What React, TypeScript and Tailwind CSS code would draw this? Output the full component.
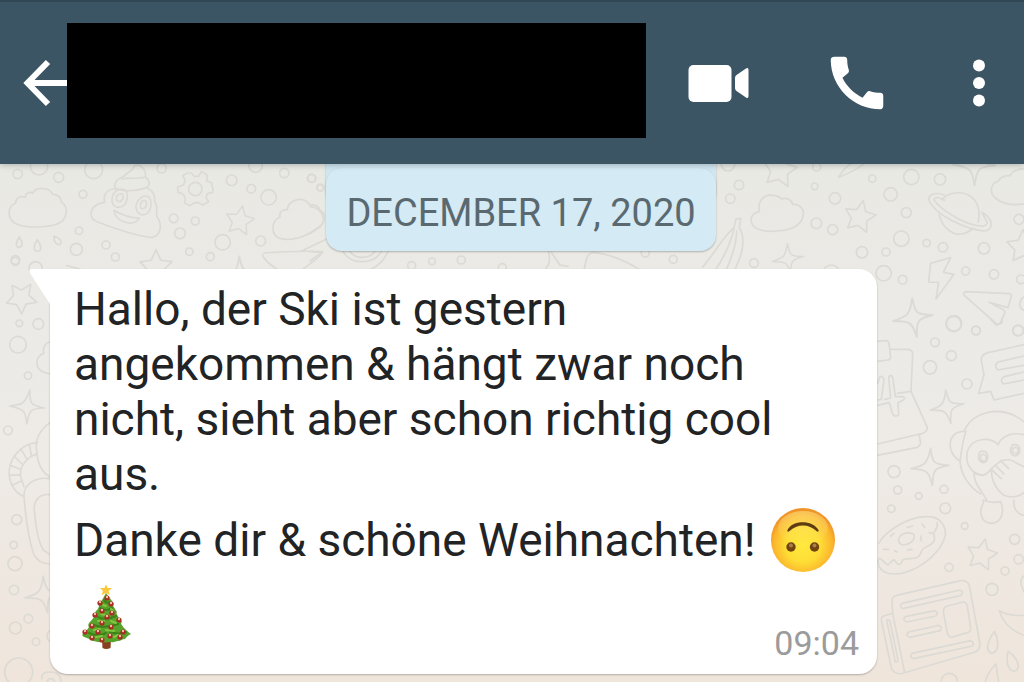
type Dot = [number, number, number];

type DoodleGroupProps = {
  x: number;
  y: number;
  dots: Dot[];
  paths: string[];
};

const STAR = "M0 -48L14 -17L47 -13L23 11L30 44L0 29L-29 43L-24 12L-47 -12L-14 -17Z";
const SPARKLE = "M-2 -52C6 -12 8 -8 52 -8C12 2 9 6 10 50C-2 12 -6 8 -52 8C-14 -4 -8 -8 -2 -52Z";

const stars = [
  { x: 240, y: 220, size: 0.3, turn: 10 },
  { x: 156, y: 266, size: 0.34, turn: 0 },
  { x: 780, y: 169, size: 0.36, turn: 10 },
  { x: 860, y: 216, size: 0.33, turn: 12 },
  { x: 1023, y: 246, size: 0.34, turn: 0 },
  { x: 982, y: 554, size: 0.32, turn: 12 },
  { x: 22, y: 297, size: 0.32, turn: 35 },
];

const sparkles = [
  { x: 788, y: 259, size: 0.3, turn: 0 },
  { x: 913, y: 318, size: 0.38, turn: 0 },
  { x: 947, y: 407, size: 0.33, turn: -2 },
  { x: 930, y: 467, size: 0.36, turn: 4 },
  { x: 27, y: 407, size: 0.33, turn: 12 },
  { x: 44, y: 595, size: 0.36, turn: 0 },
  { x: 974, y: 165, size: 0.4, turn: 10 },
  { x: 240, y: 275, size: 0.36, turn: 0 },
];

const groups: DoodleGroupProps[] = [
  {
    x: 0,
    y: 155,
    dots: [
      [53, 57, 14], [117, 34, 26], [176, 67, 15], [281, 44, 27], [485, 40, 14],
      [249, 118, 12], [767, 32, 20], [853, 54, 14], [934, 70, 12], [695, 76, 16],
      [754, 101, 13], [806, 127, 23], [960, 98, 10], [586, 102, 20], [521, 190, 13],
      [586, 198, 12], [540, 235, 16], [668, 262, 23], [782, 258, 15], [568, 290, 11],
      [631, 305, 12], [237, 227, 11], [229, 283, 18], [318, 270, 12], [346, 306, 12],
      [46, 319, 12], [107, 340, 20],
    ],
    paths: [
      "M46 145C48 128 62 122 76 126C78 112 90 110 98 114C108 96 146 94 158 118C176 118 186 132 184 142C206 152 202 188 182 202C152 220 76 220 48 206C22 194 20 156 46 145Z",
      "M58 246C48 262 44 276 57 277C70 276 68 262 58 246Z",
      "M112 254C102 270 98 288 112 289C127 288 124 272 112 254Z",
      "M162 243C160 258 168 272 180 268C190 260 176 246 162 243Z",
      "M345 102C340 76 360 70 374 62C384 52 400 44 404 32C424 24 440 48 436 66C452 78 450 92 440 98C462 108 466 124 464 140C476 158 468 170 470 184C488 208 484 240 456 248C410 244 330 216 286 198C262 184 270 148 314 142C308 118 322 102 345 102Z",
      "M347 100C370 112 410 108 440 98M366 72C390 66 410 74 436 66",
      "M342 166C342 198 400 220 418 190C392 188 364 180 342 166Z",
      "M376 105C358 96 340 110 336 130C334 154 352 162 368 154C384 142 386 114 376 105Z",
      "M368 118C356 112 346 124 350 136C358 146 374 134 368 118Z",
      "M446 126C428 116 412 134 408 152C408 174 424 186 440 176C454 166 458 138 446 126Z",
      "M438 138C426 132 418 146 422 158C430 168 444 154 438 138Z",
      "M574 54L582 64L596 64L604 50L622 60L620 78L636 84V96L640 100L638 112L622 116L618 128L626 140L608 150L596 142L582 144L570 152L554 144L556 128L548 116L534 112L533 96L550 90L556 78L548 62L562 54Z",
      "M840 186C836 172 848 162 862 164C866 134 910 120 930 150C950 148 958 158 960 166C984 180 974 208 948 222C914 248 870 260 838 250C812 238 812 200 840 186Z",
      "M792 294C850 290 930 288 968 290C958 310 930 326 910 342M788 300C790 312 812 330 830 342M905 288L988 248",
      "M200 332L240 342",
    ],
  },
  {
    x: 310,
    y: 155,
    dots: [
      [366, 319, 10], [454, 315, 12], [305, 332, 12], [577, 338, 12],
      [1090, 313, 12], [1006, 294, 12], [6, 70, 12], [32, 98, 10],
    ],
    paths: [
      "M100 290C120 330 190 330 214 290M120 290C140 316 180 310 194 290M234 290C220 320 200 336 180 344",
      "M822 344C830 320 826 296 850 292C900 296 950 320 990 344M716 290C722 320 716 330 708 340M724 292L750 330L774 334",
      "M0 155C40 158 50 200 30 216L0 236M0 290L36 292L0 318",
    ],
  },
  {
    x: 700,
    y: 155,
    dots: [
      [84, 28, 20], [117, 90, 14], [91, 131, 14], [350, 36, 12], [344, 94, 10],
      [405, 130, 17], [349, 205, 16], [398, 224, 15], [517, 71, 11], [572, 118, 20],
      [634, 66, 23], [720, 73, 17], [619, 173, 15], [604, 251, 23], [680, 264, 11],
      [729, 277, 14], [852, 280, 17], [486, 292, 17], [558, 291, 12], [551, 355, 23],
      [608, 374, 13], [797, 348, 12], [882, 358, 14], [762, 505, 23], [828, 527, 13],
      [955, 526, 16], [162, 324, 13], [394, 356, 26], [957, 193, 15], [963, 373, 13],
    ],
    paths: [
      "M178 170C172 136 194 114 226 122C240 126 246 132 246 132C260 126 276 136 278 148C300 146 312 162 310 178C306 214 270 226 230 228C194 232 158 224 154 200C150 182 164 172 178 170Z",
      "M109 192L122 190L118 220C132 240 130 270 124 294C118 316 110 330 106 342M108 192L102 218C70 244 40 300 8 336M102 222C90 270 70 310 48 342M110 228C110 270 94 310 80 342",
      "M416 66C430 44 444 28 460 24M418 66C440 58 470 42 490 28",
      "M726 134C744 112 786 106 812 124C836 140 842 176 834 202M718 178C726 220 760 240 782 237C800 236 812 226 820 220",
      "M734 120C704 110 682 118 688 138C704 178 794 222 852 228C880 226 884 194 846 172C852 184 858 194 862 204C856 220 830 212 802 204C756 186 712 152 702 134C704 122 722 130 734 136",
      "M896 78C900 66 914 62 930 62C936 48 956 40 976 42M896 78C868 86 868 118 890 132C914 150 944 152 976 146",
      "M692 325L752 308L730 352L762 358L708 432L716 382L686 381Z",
      "M798 410L928 416Q936 418 934 424L924 458L868 442L910 464Q916 468 914 476L900 506Q894 510 886 504L794 422Q786 412 798 410Z",
      "M976 424C952 436 956 462 976 468",
    ],
  },
  {
    x: 860,
    y: 320,
    dots: [
      [281, 12, 23], [348, 31, 13], [225, 67, 13], [274, 107, 15], [210, 142, 20],
      [321, 192, 15], [102, 455, 18], [113, 510, 12], [252, 508, 12], [176, 528, 10],
      [474, 32, 16],
    ],
    paths: [
      "M52 64L76 62Q86 62 87 70L92 112Q92 118 84 120L52 124",
      "M90 88L142 88Q158 88 158 102L153 214L202 322Q202 336 188 340L52 372",
      "M178 346L182 370Q180 378 172 382L52 406",
      "M52 240L64 238L72 180Q68 166 60 170L52 190M52 256L88 248L98 282Q106 294 116 284L114 248L130 240Q138 232 128 230L106 230L98 172Q92 160 86 172L92 234L74 238M112 220L153 214",
      "M492 74L384 98Q362 104 364 122L372 164L356 220L392 214L402 240L492 220",
      "M492 108L414 126Q400 138 414 150L492 136M492 156L432 170Q418 180 430 192L492 180",
      "M312 334C330 292 372 274 414 274C450 276 474 290 492 306M312 334C262 334 256 396 300 424C304 400 308 360 318 334M300 424C304 470 332 504 362 522",
      "M414 374C390 350 336 352 322 394C314 436 338 464 370 466C390 458 396 440 416 428C430 416 454 416 470 430L492 440M414 374C426 346 460 336 492 344",
      "M368 466L342 460C340 490 368 516 380 540M396 444C390 470 404 506 432 526C456 536 476 530 492 518M398 452L424 476M406 436L432 462M422 422L446 446",
      "M362 394C350 410 356 426 370 428C388 424 386 400 374 394ZM362 408Q370 398 378 408V420Q370 428 362 418Z",
      "M458 374C446 390 452 406 466 408C484 404 482 380 470 374ZM458 386Q466 378 474 386V398Q466 404 458 396Z",
      "M392 -2L410 16L426 8V-4",
    ],
  },
  {
    x: 860,
    y: 500,
    dots: [
      [94, 26, 11], [256, 25, 16], [314, 78, 10], [464, 118, 15], [476, 178, 14],
      [435, 213, 12], [396, 268, 18], [267, 202, 12], [268, 544, 24],
    ],
    paths: [
      "M370 10C354 36 364 70 396 70C426 68 434 34 422 4C406 8 386 8 370 0ZM462 0C458 22 470 42 492 46",
      "M56 130C80 90 150 46 206 50C240 50 258 78 256 106C246 152 190 204 126 220C80 228 52 212 54 180",
      "M56 176C70 174 74 196 84 194C94 190 96 176 104 180C114 200 122 196 128 180C144 170 160 182 176 170C190 150 180 148 200 140C220 132 228 120 222 106C218 88 236 90 232 68",
      "M116 116C122 98 150 94 162 104C166 122 148 136 126 134Q114 130 116 116Z",
      "M142 82L158 78M186 72L194 82M92 108L102 100M182 108L184 122M70 148L86 148M104 152L112 156M142 150L156 148M208 98L218 100",
      "M96 304Q96 290 110 286L302 242Q322 240 328 256L360 432Q360 450 346 456L120 522Q100 520 94 504L64 360Q64 348 76 346L98 340L134 518M96 304L98 340",
      "M80 360Q86 356 90 364L114 480Q112 488 106 486Z",
      "M126 310L300 270Q312 276 304 286L128 326Q116 318 126 310Z",
      "M136 350L224 332Q238 338 228 348L140 366Q126 360 136 350Z",
      "M146 396L236 376Q250 384 240 392L150 412Q134 406 146 396Z",
      "M156 460L332 422Q344 428 338 438L160 476Q146 468 156 460Z",
      "M262 318L310 306Q320 308 322 318L332 384Q332 396 322 398L276 412Q266 412 262 400L250 334Q250 322 262 318Z",
      "M404 394C384 420 374 450 394 460C420 458 416 420 404 394ZM444 454C438 484 442 510 462 514C486 508 474 474 444 454ZM408 492C386 514 378 530 376 548M408 492L416 548",
      "M492 406C460 394 428 370 418 332C440 344 466 348 492 346M492 228C476 240 484 256 492 276",
    ],
  },
  {
    x: 0,
    y: 260,
    dots: [
      [58, 190, 10], [115, 192, 16], [54, 254, 25], [84, 347, 11], [24, 511, 13],
      [50, 779, 15], [41, 855, 11], [45, 911, 21], [42, 990, 14], [85, 1076, 13],
      [46, 1104, 18], [108, 1145, 11], [56, 1236, 42], [46, 0, 13],
    ],
    paths: [
      "M150 246C130 250 128 272 132 280C104 290 104 324 130 336L150 342",
      "M150 488C120 510 104 540 110 574C114 620 130 640 150 650",
      "M112 548C60 552 22 600 28 650C34 684 50 700 68 708M112 582C80 590 58 620 62 650L72 680M88 552L94 586M62 566L80 596M42 588L66 612M30 616L62 628M28 646L62 644M36 676L66 662",
      "M150 656C110 650 70 670 72 710C76 760 84 830 100 880C112 906 130 912 150 912M150 704C116 700 98 724 104 760C108 810 118 850 130 870L150 884",
      "M126 1256C124 1240 136 1236 150 1236C170 1236 184 1244 182 1266M142 1266C142 1254 160 1252 164 1266M150 1112C136 1120 140 1138 150 1144",
    ],
  },
];

function DoodleGroup({ x, y, dots, paths }: DoodleGroupProps) {
  return (
    <g transform={`translate(${x} ${y}) scale(0.3333)`} strokeWidth="5">
      {dots.map(([cx, cy, r], index) => (
        <circle key={index} cx={cx} cy={cy} r={r} />
      ))}
      {paths.map((d) => (
        <path key={d} d={d} />
      ))}
    </g>
  );
}

function Wallpaper() {
  return (
    <svg
      className="absolute inset-0 w-full h-full"
      viewBox="0 0 1024 682"
      preserveAspectRatio="xMidYMin slice"
      fill="none"
      stroke="#dcdad5"
      strokeLinejoin="round"
      strokeLinecap="round"
      aria-hidden="true"
    >
      {groups.map((group, index) => (
        <DoodleGroup key={index} {...group} />
      ))}
      {stars.map((s, index) => (
        <path
          key={index}
          d={STAR}
          strokeWidth="5"
          transform={`translate(${s.x} ${s.y}) rotate(${s.turn}) scale(${s.size})`}
        />
      ))}
      {sparkles.map((s, index) => (
        <path
          key={index}
          d={SPARKLE}
          strokeWidth="5"
          transform={`translate(${s.x} ${s.y}) rotate(${s.turn}) scale(${s.size})`}
        />
      ))}
    </svg>
  );
}

function UpsideDownFace() {
  return (
    <svg
      className="inline-block size-16 ml-1 align-[-16px]"
      viewBox="0 0 64 64"
      role="img"
      aria-label="Upside-down face"
    >
      <defs>
        <radialGradient id="face" cx="50%" cy="58%" r="54%">
          <stop offset="0" stopColor="#ffe93e" />
          <stop offset="0.5" stopColor="#fedd35" />
          <stop offset="0.85" stopColor="#fbb52c" />
          <stop offset="1" stopColor="#ef9426" />
        </radialGradient>
        <linearGradient id="shine" x1="0" y1="0" x2="0" y2="1">
          <stop offset="0" stopColor="#ffe98a" stopOpacity="0.5" />
          <stop offset="1" stopColor="#ffe98a" stopOpacity="0" />
        </linearGradient>
      </defs>
      <circle cx="32" cy="32" r="32" fill="url(#face)" />
      <ellipse cx="32" cy="20" rx="25" ry="17" fill="url(#shine)" />
      <path
        d="M16.500 22C21 11.500 42 11.500 47.500 22C48 24 46.500 24 45.500 23C38 15.500 26 15.500 18.500 23C17 24 16 24 16.500 22Z"
        fill="#5d3c12"
      />
      <circle cx="20" cy="39" r="4.700" fill="#70430f" />
      <circle cx="43.500" cy="39" r="4.700" fill="#70430f" />
      <circle cx="20" cy="37.500" r="2" fill="#a8804c" />
      <circle cx="43.500" cy="37.500" r="2" fill="#a8804c" />
    </svg>
  );
}

const baubles = [
  [33, 13], [26, 18], [37, 19], [28, 26], [38, 28], [21, 30], [33, 32], [45, 35],
  [28, 38], [18, 41], [37, 42], [11, 47], [24, 47], [49, 47], [36, 51], [18, 53],
  [46, 52], [28, 55],
];

function ChristmasTree() {
  return (
    <svg
      className="inline-block size-16 align-[-16px]"
      viewBox="0 0 64 64"
      role="img"
      aria-label="Christmas tree"
    >
      <path d="M28 54H37L36.500 63Q32 65 28.500 63Z" fill="#87401e" />
      <path
        d="M32 8C35 12 37 14 40 19C38 20 39 21 43 27C42 28 42 29 48 37C47 38 46 38 50 43C52 45 54 47 57 49C53 51 53 52 51 54C48 54 47 56 44 56C41 56 40 58 37 57C33 57 31 58 28 57C25 58 22 56 19 56C17 55 16 54 13 53C11 52 9 52 8 50C11 48 13 45 15 42C14 41 14 40 15 38C18 35 20 32 21 31C20 30 21 28 22 26C25 23 25 22 25 19C28 16 29 13 32 8Z"
        fill="#57a32c"
      />
      <path
        d="M30 15Q32 19 36 17M26 23Q32 27 38 23M24 32Q31 36 42 31M20 40Q30 44 44 39M15 48Q24 52 32 48M36 47Q44 50 52 47"
        stroke="#3b8218"
        strokeWidth="2"
        fill="none"
        strokeLinecap="round"
      />
      <path
        d="M29 20L32 21M27 29L31 30M37 24L39 26M24 36L30 36M37 36L42 38M20 45L26 44M32 45L40 46M22 52L28 51M40 52L44 50"
        stroke="#83c83c"
        strokeWidth="2"
        fill="none"
        strokeLinecap="round"
      />
      {baubles.map(([cx, cy]) => (
        <g key={`${cx}-${cy}`}>
          <circle cx={cx} cy={cy} r="2.600" fill="#a92d22" />
          <circle cx={cx} cy={cy - 1} r="1.200" fill="#f2c0a8" />
        </g>
      ))}
      <path d="M32 -1L33.500 3L38 3L34.500 6L36 10L32 8L27.500 10L29 6L26 3L30.500 3Z" fill="#fcc83a" />
    </svg>
  );
}

function Header() {
  return (
    <header className="relative z-10 flex items-center h-[164px] pl-5 pr-2.5 border-t-2 border-[#304856] bg-[#3c5564] shadow-[0_1px_6px_rgba(0,0,0,0.25)]">
      <button type="button" aria-label="Back" className="w-[47px] shrink-0 text-white">
        <svg className="w-[47px] h-[50px]" viewBox="0 0 47 50" fill="none">
          <path
            d="M28 4L7.500 25L28 46M8 25H47"
            stroke="currentColor"
            strokeWidth="6"
            strokeLinejoin="miter"
          />
        </svg>
      </button>
      <div className="flex-1 self-start h-[115px] mt-[21px] bg-black" />
      <div className="flex items-center ml-9 text-white">
        <button type="button" aria-label="Video call" className="mr-[68px]">
          <svg className="w-[72px] h-[70px]" viewBox="0 0 72 70" fill="currentColor">
            <rect x="6.500" y="17" width="43" height="37" rx="5" />
            <path d="M53 30Q53 28 54.500 27L64 20.500Q66.500 19 66.500 22V48Q66.500 51 64 49.500L54.500 43Q53 42 53 40Z" />
          </svg>
        </button>
        <button type="button" aria-label="Voice call" className="mr-[52px]">
          <svg className="size-[70px]" viewBox="0 0 24 24" fill="currentColor">
            <path d="M20.010 15.380c-1.230 0-2.420-.2-3.530-.56-.35-.12-.74-.03-1.010.24l-1.570 1.970c-2.830-1.350-5.480-3.900-6.890-6.830l1.950-1.660c.27-.28.35-.67.24-1.020-.37-1.110-.56-2.300-.56-3.530 0-.54-.45-.99-.99-.99H4.190C3.650 3 3 3.240 3 3.990 3 13.280 10.730 21 20.010 21c.71 0 .99-.63.99-1.180v-3.450c0-.54-.45-.99-.99-.99z" />
          </svg>
        </button>
        <button type="button" aria-label="More options">
          <svg className="size-[70px]" viewBox="0 0 70 70" fill="currentColor">
            <circle cx="35" cy="17.500" r="6" />
            <circle cx="35" cy="35" r="6" />
            <circle cx="35" cy="52.500" r="6" />
          </svg>
        </button>
      </div>
    </header>
  );
}

function DateChip({ label }: { label: string }) {
  return (
    <div className="relative self-center ml-[18px]">
      <div className="absolute inset-x-0 -top-10 h-20 rounded-2xl bg-[#d0e7f2] shadow-[0_1px_2px_rgba(0,0,0,0.25)]" />
      <div className="relative px-5 pt-5 pb-3 rounded-2xl bg-[#d4eaf5] text-[38px] leading-[51px] text-[#5a6970] shadow-[0_1px_2px_rgba(0,0,0,0.25)]">
        {label}
      </div>
    </div>
  );
}

function Message() {
  return (
    <article className="relative mt-[18px] ml-[50px] mr-[147px] px-6 pt-[13px] pb-[18px] rounded-[18px] rounded-tl-none bg-white shadow-[0_1px_2px_rgba(0,0,0,0.25)] text-[46px] text-[#212325]">
      <svg className="absolute top-0 -left-[21px] w-[22px] h-9" viewBox="0 0 22 36" aria-hidden="true">
        <path d="M22 0H3Q-1 0 1 4L21 35H22Z" fill="#ffffff" />
      </svg>
      <p className="leading-[55px]">
        Hallo, der Ski ist gestern angekommen &amp; hängt zwar noch nicht, sieht aber schon richtig cool aus.
      </p>
      <p className="leading-[77px]">
        Danke dir &amp; schöne Weihnachten! <UpsideDownFace />
      </p>
      <div className="flex justify-between items-end leading-[77px]">
        <span>
          <ChristmasTree />
        </span>
        <time className="-mr-1.5 text-[34px] leading-[26px] text-[#9b9b9b]">09:04</time>
      </div>
    </article>
  );
}

export default function App() {
  return (
    <div className="relative min-h-screen overflow-hidden bg-linear-to-b from-[#e9e9e4] from-25% via-[#eeebe7] via-65% to-[#efe5db] font-['Roboto',sans-serif]">
      <Wallpaper />
      <Header />
      <main className="relative flex flex-col pt-1">
        <DateChip label="DECEMBER 17, 2020" />
        <Message />
      </main>
    </div>
  );
}
